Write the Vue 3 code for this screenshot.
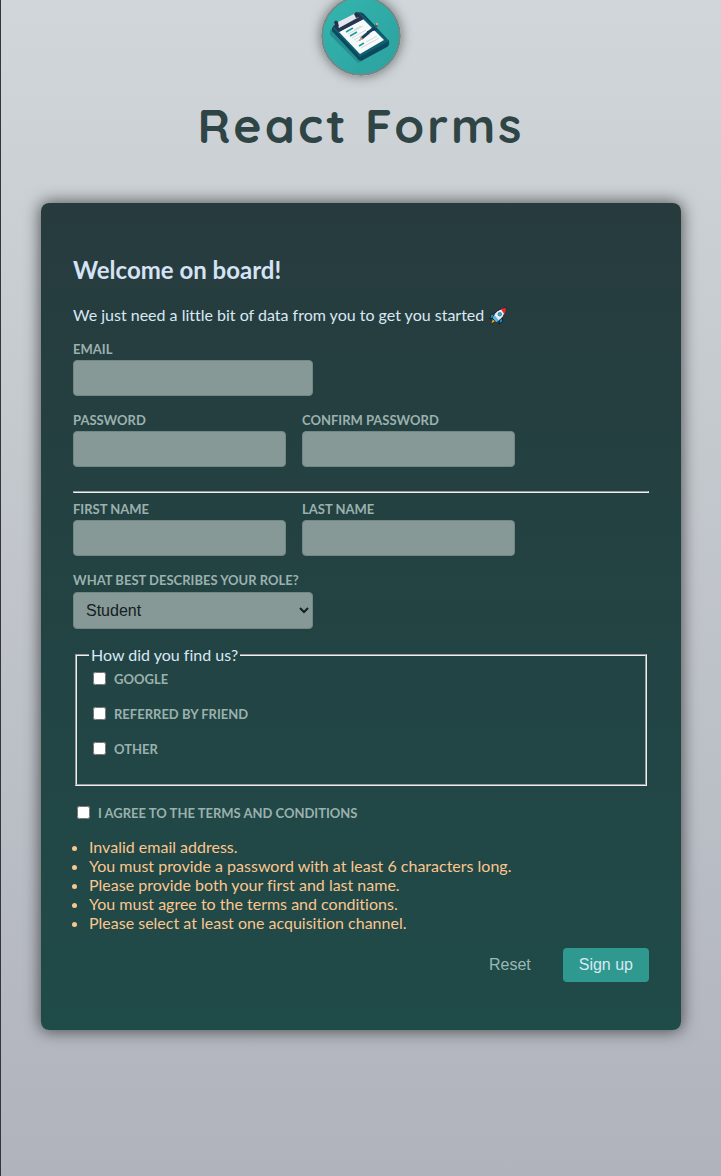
<script setup>
import { ref } from 'vue'

const role = ref('student')
const channels = ref([])
const agreed = ref(false)

const roles = [
  { value: 'student', label: 'Student' },
  { value: 'teacher', label: 'Teacher' },
  { value: 'employee', label: 'Employee' },
  { value: 'founder', label: 'Founder' },
  { value: 'other', label: 'Other' }
]

const sources = [
  { id: 'google', label: 'Google' },
  { id: 'friend', label: 'Referred by friend' },
  { id: 'other', label: 'Other' }
]

const errors = [
  'Invalid email address.',
  'You must provide a password with at least 6 characters long.',
  'Please provide both your first and last name.',
  'You must agree to the terms and conditions.',
  'Please select at least one acquisition channel.'
]
</script>

<template>
  <div class="page">
    <header>
      <svg class="logo" viewBox="0 0 80 80" role="img" aria-label="Clipboard with a form">
        <defs>
          <linearGradient id="teal" x1="0" y1="0" x2="1" y2="1">
            <stop offset="0" stop-color="#35b5ae" />
            <stop offset="1" stop-color="#2ba19f" />
          </linearGradient>
        </defs>
        <circle cx="40" cy="40" r="39" fill="url(#teal)" stroke="#748786" stroke-width="2" />
        <path d="M9 34 L9 39 L37 67 L42 65 L39 30 Z" fill="#238f91" />
        <path d="M11 35 Q10 32 13 30 L36 17 Q40 15 43 18 L68 45 Q69 49 66 51 L42 64 Q38 66 36 62 Z" fill="#0b4a5c" />
        <path d="M12 32 L38 16 L68 45 L39 61 Z" fill="#0f6073" />
        <path d="M18 36 L42 23 L63 44 L39 58 Z" fill="#f6fafb" />
        <path d="M12 30 L38 17 L43 23 L18 36 Z" fill="#273653" />
        <path d="M15 27 L35 17 L38 21 L18 32 Z" fill="#e2e8ed" />
        <path d="M14 29 L13 26 Q15 23 17 26 L18 31 Z M33 18 L35 16 Q38 16 38 21 L35 22 Z" fill="#26314a" />
        <path d="M25 36 L32 32 M29 40 L36 36 M38 50 L43 47" stroke="#219d98" stroke-width="1.6" fill="none" />
        <path d="M33 34 L40 30 M27 38 L42 30 M31 42 L45 34 M33 44 L47 36 M35 46 L49 38 M45 46 L56 40 M40 52 L58 42" stroke="#cbd1d4" stroke-width="0.8" fill="none" />
        <path d="M38 45 L40 41 L53 30 L55 32 L42 43 Z" fill="#173f5d" />
        <path d="M38 45 L40 41 L42 43 Z" fill="#dda16d" />
        <path d="M46 36 L56 33" stroke="#173f5d" stroke-width="1.6" />
        <path d="M53 30 L55 28 L57 30 L55 32 Z" fill="#315e72" />
        <circle cx="56" cy="28" r="1.2" fill="#d5a780" />
      </svg>
      <h1>React Forms</h1>
    </header>

    <form @submit.prevent>
      <h2>Welcome on board!</h2>
      <p class="intro">
        We just need a little bit of data from you to get you started
        <svg class="rocket" viewBox="0 0 20 20" role="img" aria-label="rocket">
          <path d="M6 7 L2 9 L1 13 L5 12 Z M12 15 L11 19 L15 16 L15 12 Z" fill="#2798db" stroke="#080c0f" stroke-width="0.8" stroke-linejoin="round" />
          <path d="M4 13 L2 19 L7 16 Z" fill="#f7a527" stroke="#080c0f" stroke-width="0.6" stroke-linejoin="round" />
          <path d="M4 12 Q7 2 19 1 Q18 12 8 17 Z" fill="#e9edf0" stroke="#080c0f" stroke-width="0.9" stroke-linejoin="round" />
          <path d="M13 2 Q16 1 19 1 Q19 4 17 8 Z" fill="#e52632" />
          <path d="M4 12 L8 17 L11 15 L6 9 Z" fill="#4eb5ea" />
          <circle cx="12" cy="8" r="2" fill="#36a9df" stroke="#20566f" stroke-width="0.7" />
        </svg>
      </p>

      <div class="control">
        <label for="email">Email</label>
        <input id="email" class="wide" type="email" name="email">
      </div>

      <div class="row">
        <div class="control">
          <label for="password">Password</label>
          <input id="password" type="password" name="password">
        </div>
        <div class="control">
          <label for="confirm-password">Confirm Password</label>
          <input id="confirm-password" type="password" name="confirm-password">
        </div>
      </div>

      <hr>

      <div class="row">
        <div class="control">
          <label for="first-name">First Name</label>
          <input id="first-name" type="text" name="first-name">
        </div>
        <div class="control">
          <label for="last-name">Last Name</label>
          <input id="last-name" type="text" name="last-name">
        </div>
      </div>

      <div class="control role">
        <label for="role">What best describes your role?</label>
        <select id="role" v-model="role" class="wide" name="role">
          <option v-for="r in roles" :key="r.value" :value="r.value">{{ r.label }}</option>
        </select>
      </div>

      <fieldset>
        <legend>How did you find us?</legend>
        <div v-for="s in sources" :key="s.id" class="check">
          <input :id="s.id" v-model="channels" type="checkbox" name="acquisition" :value="s.id">
          <label :for="s.id">{{ s.label }}</label>
        </div>
      </fieldset>

      <div class="check terms">
        <input id="terms" v-model="agreed" type="checkbox" name="terms">
        <label for="terms">I agree to the terms and conditions</label>
      </div>

      <ul>
        <li v-for="e in errors" :key="e">{{ e }}</li>
      </ul>

      <div class="actions">
        <button type="reset" class="flat">Reset</button>
        <button type="submit" class="primary">Sign up</button>
      </div>
    </form>
  </div>
</template>

<style>
body {
  background: #b0b3bc;
}
</style>

<style scoped>
.page {
  box-sizing: border-box;
  min-height: 100vh;
  overflow: hidden;
  border-left: 1px solid #37353b;
  padding-bottom: 48px;
  background: linear-gradient(180deg, #d0d6d9, #b0b3bc);
  font-family: Lato, "Open Sans", sans-serif;
  font-size: 16px;
  line-height: 19px;
  font-variant-ligatures: none;
  color: #d9e8f5;
}

header {
  display: flex;
  flex-direction: column;
  align-items: center;
  margin-top: -4px;
}

.logo {
  width: 80px;
  height: 80px;
  border-radius: 50%;
  box-shadow: 0 0 12px rgba(0, 0, 0, 0.5);
}

h1 {
  margin: 19px 0 0;
  font-family: Quicksand, Lato, sans-serif;
  font-size: 48px;
  line-height: 60px;
  letter-spacing: 3px;
  font-weight: 700;
  color: #2f4445;
}

form {
  box-sizing: border-box;
  max-width: 640px;
  margin: 48px auto 0;
  padding: 52px 32px 48px;
  border-radius: 8px;
  background: linear-gradient(180deg, #273b3d, #1f4b49);
  box-shadow: 0 0 16px 1px rgba(0, 0, 0, 0.6);
}

h2 {
  margin: 0;
  font-size: 24px;
  line-height: 30px;
  color: #d5e3f5;
}

.intro {
  margin: 20px 0 16px;
}

.rocket {
  width: 20px;
  height: 18px;
  vertical-align: -4px;
}

.control {
  display: flex;
  flex-direction: column;
  align-items: flex-start;
  gap: 3px;
}

.role {
  gap: 4px;
}

label {
  font-size: 13px;
  line-height: 16px;
  font-weight: 700;
  text-transform: uppercase;
  color: #9bb1ae;
}

.row {
  display: flex;
  flex-wrap: wrap;
  gap: 16px;
}

.control + .row,
.row + .control {
  margin-top: 16px;
}

.control input,
select {
  box-sizing: border-box;
  width: 213px;
  height: 36px;
  padding: 8px;
  border: 1px solid #728886;
  border-radius: 4px;
  background-color: #869997;
  font: 16px "Liberation Sans", Arial, sans-serif;
  color: #142021;
}

.control .wide {
  width: 240px;
}

select {
  height: 37px;
}

hr {
  margin: 24px 0 8px;
}

fieldset {
  margin: 16px 2px 0;
  padding: 7px 12px 8px;
}

legend {
  padding: 0 2px;
}

.check {
  display: flex;
  gap: 8px;
  height: 35px;
}

.check input {
  width: 13px;
  height: 13px;
  margin: 1px 0 0 4px;
}

.terms {
  margin-top: 19px;
  height: 16px;
}

ul {
  margin: 16px 0;
  padding-left: 16px;
  color: #fbc68e;
}

.actions {
  display: flex;
  justify-content: flex-end;
  gap: 16px;
}

button {
  height: 34px;
  padding: 0 16px;
  border: 0;
  border-radius: 4px;
  font: 16px "Liberation Sans", Arial, sans-serif;
}

.flat {
  background: transparent;
  color: #9bb8b5;
}

.primary {
  background: #30998f;
  color: #d9e8f5;
}
</style>
